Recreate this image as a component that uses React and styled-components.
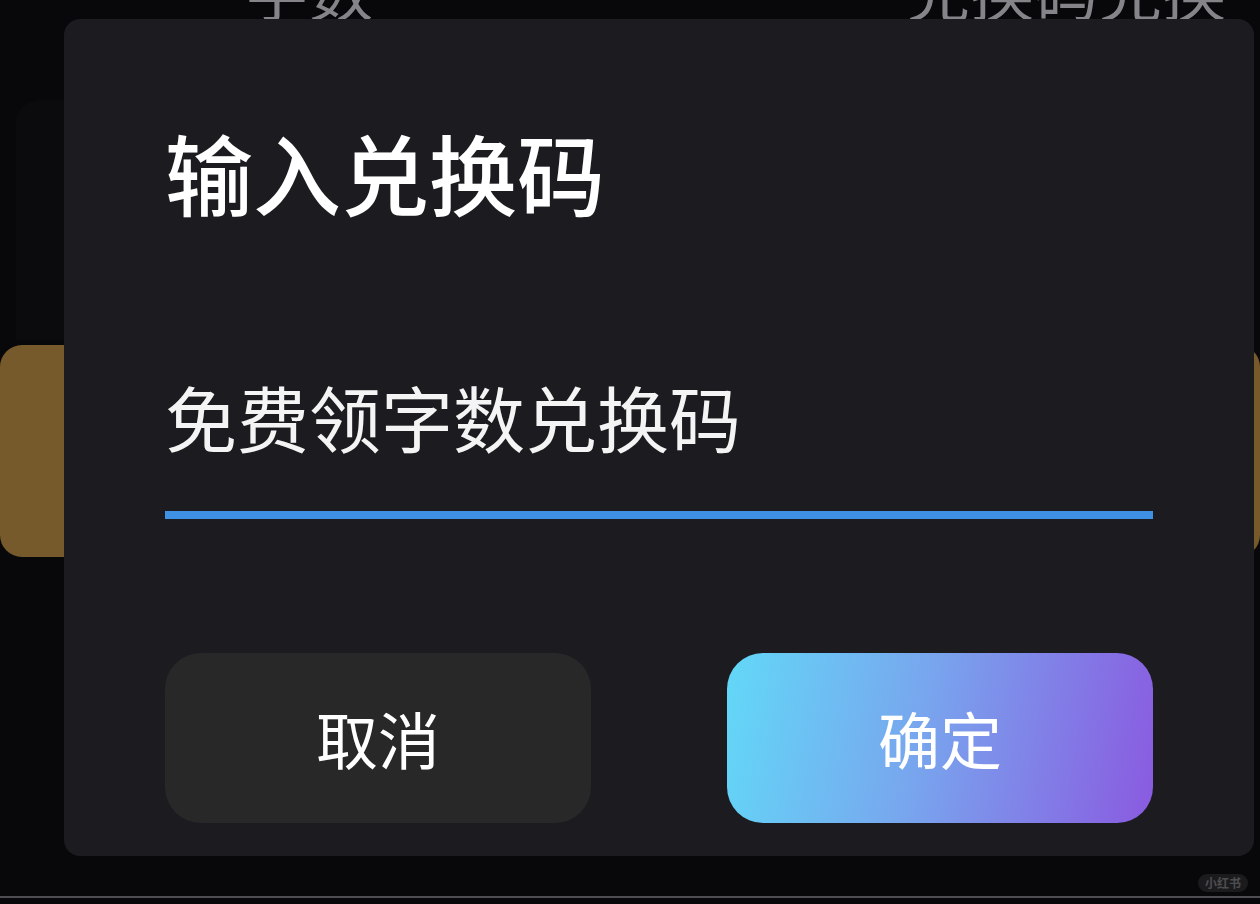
import React from "react";
import styled, { createGlobalStyle } from "styled-components";

const Global = createGlobalStyle`
  html, body { margin: 0; padding: 0; background: #08080b; }
  body { font-family: "Noto Sans CJK SC", "Noto Sans", sans-serif; }
  * { box-sizing: border-box; }
`;

const Page = styled.div`
  position: relative;
  width: 1260px;
  height: 904px;
  overflow: hidden;
  background: #08080b;
  display: flex;
  flex-direction: column;
`;

const TopRow = styled.div`
  display: flex;
  justify-content: space-between;
  padding: 0 34px 0 245px;
  margin-top: -44px;
  height: 64px;
`;

const TopLabel = styled.span`
  font-size: 64px;
  line-height: 64px;
  color: #858589;
  font-weight: 400;
`;

const GhostCard = styled.div`
  margin: 80px 0 0 16px;
  width: 80px;
  height: 240px;
  border-radius: 24px 0 0 0;
  background: #0b0b0e;
`;

const GoldBanner = styled.div`
  margin-top: 5px;
  height: 212px;
  border-radius: 22px;
  background: #775a2c;
`;

const Spacer = styled.div`
  flex: 1;
`;

const FooterLine = styled.div`
  height: 2px;
  background: #4e4e52;
  margin-bottom: 6px;
`;

const Watermark = styled.div`
  position: absolute;
  right: 12px;
  bottom: 12px;
  padding: 1px 7px;
  border-radius: 10px;
  background: #1b1b1d;
  color: #4d4d50;
  font-size: 12px;
  line-height: 16px;
  font-weight: 700;
`;

const Dialog = styled.div`
  position: absolute;
  left: 64px;
  top: 19px;
  width: 1190px;
  height: 837px;
  border-radius: 16px;
  background: #1c1c20;
  padding: 108px 101px 33px;
  display: flex;
  flex-direction: column;
`;

const Title = styled.h1`
  margin: 0;
  font-size: 88px;
  line-height: 88px;
  font-weight: 500;
  color: #ffffff;
`;

const Field = styled.div`
  margin-top: 165px;
  padding-bottom: 59px;
  border-bottom: 8px solid #3f91e4;
`;

const FieldText = styled.div`
  font-size: 72px;
  line-height: 72px;
  color: #f4f4f4;
  font-weight: 400;
`;

const Actions = styled.div`
  margin-top: 134px;
  display: grid;
  grid-template-columns: 1fr 1fr;
  column-gap: 136px;
`;

const Button = styled.button`
  height: 170px;
  border: none;
  border-radius: 36px;
  font-family: inherit;
  font-size: 62px;
  line-height: 1;
  font-weight: 400;
  color: #ffffff;
  background: ${(p) =>
    p.$primary
      ? "linear-gradient(100deg, #62d8f7 0%, #78a6ee 45%, #8a5ae0 100%)"
      : "#282829"};
  display: flex;
  align-items: center;
  justify-content: center;
  padding: 0;
`;

export default function App() {
  return (
    <>
      <Global />
      <Page>
        <TopRow>
          <TopLabel>字数</TopLabel>
          <TopLabel>兑换码兑换</TopLabel>
        </TopRow>
        <GhostCard />
        <GoldBanner />
        <Spacer />
        <FooterLine />
        <Watermark>小红书</Watermark>
        <Dialog>
          <Title>输入兑换码</Title>
          <Field>
            <FieldText>免费领字数兑换码</FieldText>
          </Field>
          <Actions>
            <Button>取消</Button>
            <Button $primary>确定</Button>
          </Actions>
        </Dialog>
      </Page>
    </>
  );
}
